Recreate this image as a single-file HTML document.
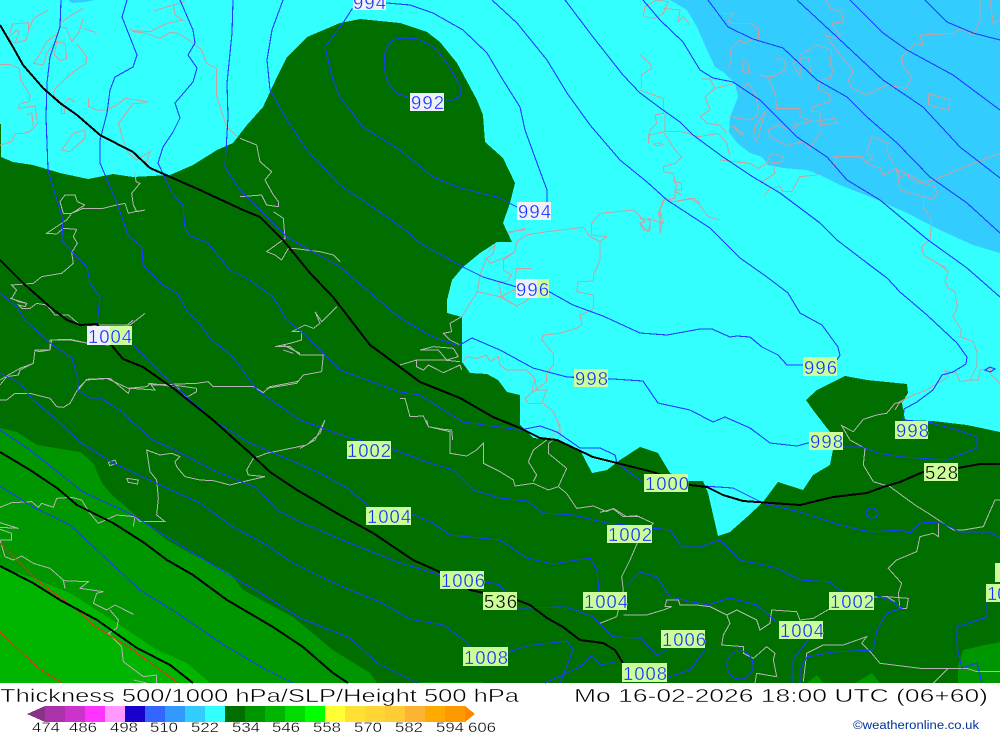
<!DOCTYPE html>
<html><head><meta charset="utf-8"><title>Thickness 500/1000 hPa/SLP/Height 500 hPa</title>
<style>
html,body{margin:0;padding:0;background:#fff;width:1000px;height:733px;overflow:hidden}
svg{display:block}
.n *{vector-effect:non-scaling-stroke}
text{font-family:"Liberation Sans",sans-serif}
.l{font-size:18.5px;fill:#1030ff;stroke:#ccff99;stroke-width:.35px}
.w{stroke:#f0f0f8}
.k{font-size:18.5px;fill:#000;stroke:#ccff99;stroke-width:.35px}
.t{font-size:18.5px;fill:#000;stroke:#fff;stroke-width:.45px}
.s{font-size:14px;fill:#000;stroke:#fff;stroke-width:.3px}
</style></head><body>
<svg width="1000" height="733" viewBox="0 0 1000 733" xmlns="http://www.w3.org/2000/svg">
<rect width="1000" height="733" fill="#fff"/>
<g shape-rendering="crispEdges">
<rect width="1000" height="683" fill="#33ffff"/>
<polygon fill="#33ccff" points="670,0 687,10 697,27 707,50 715,67 723,72 735,83 738,97 730,117 729,132 737,143 750,153 762,157 768,165 783,168 807,170 820,175 840,185 873,198 907,213 940,230 973,245 1000,253 1000,0"/>
<polygon fill="#33ccff" points="68,0 72,3 85,2 95,0"/>
<polygon fill="#006f00" points="0,124 1,124 1,157 13,162 33,165 60,173 88,179 113,174 133,177 170,175 193,165 217,150 233,143 247,125 263,107 277,77 287,57 307,37 340,23 360,19 400,23 427,32 440,42 457,63 477,100 483,115 485,142 503,158 515,183 510,203 503,223 512,242 497,242 480,253 463,267 452,280 447,300 447,313 462,317 462,362 470,373 487,374 498,380 507,392 520,395 520,425 533,438 557,440 580,450 592,473 607,470 620,460 640,447 658,453 670,473 688,481 703,481 708,493 718,536 730,532 747,517 763,502 778,482 803,490 813,475 830,465 833,450 830,432 813,410 806,400 817,390 845,376 867,380 907,384 908,393 902,403 905,420 933,421 967,425 1000,432 1000,683 0,683"/>
<polygon fill="#009600" points="0,428 17,432 37,445 80,452 93,463 102,483 112,495 133,513 167,540 190,553 230,573 243,590 293,617 333,650 370,673 377,683 0,683"/>
<polygon fill="#00b400" points="0,567 33,578 70,593 117,623 157,650 187,663 210,683 0,683"/>
<polygon fill="#009600" points="958,683 958,667 963,650 985,645 1000,642 1000,683"/>
<polygon fill="#009600" points="807,683 817,675 823,683"/>
<polygon fill="#009600" points="855,683 872,673 880,683"/>
<polygon fill="#009600" points="420,683 422,682 482,682 484,683"/>

<!-- coastlines on water -->
<g class="n" fill="none" stroke="#c4a2a2" stroke-width="1">
<g transform="scale(.33333)">
<path d="M0 193H30L58 205 62 240 90 285 88 305 60 310 55 325 105 318 113 370 90 395 70 400 45 400 35 425 0 435"/>
<path d="M80 345L95 338 100 380"/>
<path d="M145 30L100 55 85 95 78 120 45 130 22 115 50 90 58 95 45 130M30 100L37 72 85 68 85 95"/>
<path d="M250 25L215 45 180 70 175 100 140 125 115 170 100 190 130 195 140 160 170 120"/>
<path d="M250 55L235 100 215 125 200 85 180 80M250 85L290 98"/>
<path d="M170 125L195 130 200 175 180 182 163 165Z"/>
<path d="M230 130L260 170 258 190 220 215 165 265 160 285 185 310 185 340 195 340 190 315 205 295 225 305"/>
<path d="M265 295L265 320 290 330 320 330 350 315 375 295 445 305 420 310 400 310 355 370 370 420 385 460 410 480 450 455 435 495"/>
<path d="M390 85L400 95 440 100 480 115 510 97 535 100 580 130 605 150 620 190 650 205 650 290 680 380 715 412"/>
<path d="M460 33L520 15 555 5M520 15L525 45 550 60 500 70 450 95 400 92"/>
<path d="M255 390L220 400 185 450 210 455 255 415Z"/>
</g>
<g transform="translate(400 180) scale(.33333)">
<path d="M322 160L375 145 375 150 325 155"/>
<path d="M265 215L285 195 280 220 260 235 270 250 310 235 345 215 350 185 380 165 440 155 550 142 570 170 600 185 600 240 580 285 580 303 535 305 530 335 580 345 580 385 565 395 540 405 545 435 530 445 480 460 430 465 425 480 460 520 460 555 440 580 440 605 405 630 375 655 385 670 425 670 440 630 410 630 405 600"/>
<path d="M600 185L620 170 575 165 575 130 600 100 700 90 720 110 735 125 720 130 745 155 750 130 745 115 775 125 790 130 780 90 795 55 820 65 885 55 900 70"/>
<path d="M780 90V160M820 0L830 15 825 35 845 45"/>
<path d="M260 235L240 285 232 335 185 410"/>
<path d="M232 335L300 350 350 378 375 365 415 330 415 310 385 300M350 378L305 350 340 330 395 340"/>
<path d="M345 215L310 240 310 270 335 285 320 305 295 305 305 350M345 300L350 265 395 265"/>
<path d="M190 545L200 530 230 535 260 525 270 545 295 530 300 555 320 570 380 570 405 595 395 635M430 670L460 695 480 740 480 775"/>
</g>
<g transform="translate(640 0) scale(.33333)">
<path d="M10 50L15 20 50 0 85 5 70 40 45 55 10 50M70 25L120 30 115 65 130 50 150 75"/>
<path d="M215 40H280L265 65 275 70 330 70 355 85 355 115 335 120 310 130 300 120 270 150 275 180 265 205"/>
<path d="M310 175L308 215 325 220 327 200Z"/>
<path d="M405 175L435 180 435 210 400 230 360 225 385 235 405 280 410 325 480 325 480 350 520 365 585 355 590 370 535 375"/>
<path d="M465 175L460 195 480 230 480 175 505 172 515 225"/>
<path d="M560 0L570 25 605 35 610 65 575 70 600 105 585 115 555 105 640 215 625 240 635 265 680 285 740 255 800 265 815 230 790 200 785 170 825 130 850 135 840 105 940 100 960 88 1000 105 1020 60 1020 0"/>
<path d="M1050 0L1060 70 1080 60"/>
<path d="M480 165L530 135 575 150 570 190 580 210 570 235 540 240 535 265 570 285 570 305 520 320 515 335 540 335 540 380"/>
<path d="M300 270L325 250 345 280 355 320 350 350 325 360 270 350"/>
<path d="M375 335L345 380 340 410 350 425Z"/>
<path d="M275 375L310 400 305 405Z"/>
<path d="M385 390L415 375 460 395 465 375 510 365M385 390L390 410 440 437 490 425 510 445 545 390"/>
<path d="M580 470H665L680 490 720 505 730 525 770 505 780 530 800 525 830 550 880 540 1000 490 1080 460"/>
<path d="M680 490L700 470 680 460 695 410 710 415 745 430 740 455 760 490"/>
<path d="M580 505L590 470M535 525L480 530 455 575 430 575 420 560 390 565 375 585M360 550L405 520 400 490 390 490 430 485 430 470 395 460 380 490 355 505 330 490 240 480"/>
<path d="M780 570L770 510 800 520 850 550 885 560 890 580 880 598 850 590 780 570M850 590L850 620 875 660 870 720 845 740 850 765 920 805"/>
<path d="M865 280L930 300 925 330 865 315Z"/>
<path d="M185 237H210L225 265 195 290 210 330 180 350 200 370 240 375 260 400M225 265L285 250"/>
<path d="M0 270L70 295 70 340 45 345 50 370 30 390 25 430 25 405 75 395 125 395 175 410 235 400 260 430 270 470M75 340V395"/>
<path d="M40 433Q55 425 68 433 55 440 40 433"/>
<path d="M70 395L105 450 125 470 105 490 70 500 70 515 100 520 105 545 125 550 125 570 105 570 105 595 70 600 55 640 65 680 60 700M100 605L150 595 175 610 205 650 240 660M0 655L30 660 30 690 10 690 0 670"/>
<path d="M0 165L30 190 35 205 5 225 5 265"/>
</g>
<g transform="translate(700 240) scale(.33333)">
<path d="M690 0L665 20 670 45 720 75 745 95 735 125 745 145 765 155 772 205 758 230 785 270 780 290 820 305 832 340 830 380 810 420 780 425 770 400 735 392 745 410 680 450 640 465 600 485 585 510"/>
<path d="M810 420L835 420 840 390 870 385 875 405 900 430"/>
</g>
</g>

<!-- coastlines on land -->
<g class="n" fill="none" stroke="#b4b4b4" stroke-width="1">
<g transform="translate(0 130) scale(.33333)">
<path d="M720 25L770 45 780 95 815 125"/>
<path d="M815 125L795 150 820 195 835 215 835 230 800 225 785 195 720 200"/>
<path d="M405 130L408 155 420 160 395 190 400 225 410 245 435 240 405 245 385 250 375 220 350 225 310 235 250 235 215 250"/>
<path d="M255 225L215 250 190 250 180 215 195 195 225 195 232 215 255 225"/>
<path d="M215 250L200 270 170 290 140 310 170 312 190 295 230 298 220 320 232 340 215 368 220 400 185 430 125 440 100 460 35 465 50 480 35 505 55 515 80 520"/>
<path d="M30 505L80 520 75 530 55 525 65 535 90 535 110 520 140 525 165 555 205 555 240 585 390 585 435 550"/>
<path d="M150 630L210 628 265 640 325 645 340 620 400 570"/>
<path d="M150 630L150 660 115 665 105 660 100 700 60 715 25 735 0 750"/>
<path d="M235 780L260 748 320 745 385 775 440 770 450 760 520 770"/>
<path d="M820 245L850 265 855 325 800 365 825 375 845 390 865 355 880 355 960 365 1000 375 1020 395"/>
<path d="M945 545L965 575 1010 530M945 545L960 580 940 595 915 585 875 605 905 605 905 630 870 640 825 650 870 650 900 675 970 675 965 725 910 735 890 760 800 775"/>
<path d="M850 645L900 670M850 660L880 670"/>
</g>
<g transform="translate(400 180) scale(.33333)">
<path d="M185 410L150 430 155 455 130 460 150 480 180 495"/>
<path d="M60 510L100 500 160 505 175 530 140 540 115 510Z"/>
<path d="M0 555L50 540 130 540 180 545M50 540L50 560 70 570 85 555 130 578 180 555 185 570"/>
<path d="M0 655H15L30 710 70 708 85 740 130 748 155 750 158 780"/>
</g>
<g transform="translate(0 320) scale(.33333)">
<path d="M445 190L460 195 590 190 625 185 640 200 740 200M450 190L465 210 390 205 385 220 330 175 260 180 235 205 210 250 190 262 170 260 150 235 90 220 45 220 20 240 0 240"/>
<path d="M520 195L590 205 590 215 560 232 530 200"/>
<path d="M740 200H760L790 218 810 200 890 185 900 180"/>
<path d="M0 195L20 170 55 165 60 150 100 130 105 90 150 90 155 60 210 60 265 70"/>
</g>
<g transform="translate(0 420) scale(.33333)">
<path d="M975 0L960 40 920 75 800 100 760 115 740 150 745 165 795 170 730 185 690 195 640 182 600 180 555 170 530 140 525 125 540 110 515 100 480 105 440 90 450 155 470 180 475 235 470 285 495 305 420 305 405 290 350 285 295 310 270 280 245 240 215 232 170 235 160 262 125 250 115 262 95 245 35 248 0 262"/>
<path d="M405 290L400 320"/>
<path d="M325 128L345 120 350 130 330 137Z"/>
<path d="M380 175L415 180 412 192 385 187Z"/>
<path d="M0 308L55 325 0 322M0 328L35 340 35 360 0 360"/>
<path d="M0 360L15 410 40 420 65 408 100 430 150 445 190 480 195 505 190 482 265 485 240 505 310 515 290 520 280 550 320 570 345 555 400 583"/>
<path d="M330 570L355 600 350 625 325 640 365 680 370 725 430 770 470 765 470 789M400 780L440 789"/>
</g>
<g transform="translate(600 360) scale(.33333)">
<path d="M910 125L885 130 860 160 830 165 790 178 760 215 725 197 750 240 795 265 790 315 820 365 870 380 945 435 985 460 1060 510 1090 510 1150 500 1165 465 1185 420 1200 420"/>
<path d="M0 457L40 447 70 470 110 467 160 490 120 530 90 600 65 650 70 690 50 770 0 790"/>
<path d="M70 765L140 765 190 750 215 740 195 740 200 720 235 720 240 735 290 735 330 740 380 765 390 790 370 825 365 855 430 860 430 880 460 895 500 860 525 880 520 900 530 950 470 940 465 969"/>
<path d="M380 765L410 750 470 780 480 810 510 790 515 750 590 755 600 780 640 775 700 740 790 712 860 710 885 725"/>
<path d="M860 710L925 715 920 745 900 745 895 700 905 670 865 625 890 600 950 575 960 530 1000 520 1015 530 1015 490"/>
<path d="M610 965L620 880 670 855 730 855 800 830 785 850 815 880 840 910 960 925 1100 925 1130 935 1200 935M1045 925L1000 969"/>
</g>
<g transform="translate(300 420) scale(.33333)">
<path d="M0 85L45 60 75 0"/>
<path d="M380 0L385 20 450 35 450 100 500 108 530 90 550 70 550 130 600 155 640 180 645 198 700 190 745 210 775 200 800 220 830 265 880 258 920 275 940 265 980 290 1020 290"/>
<path d="M770 0L780 30 700 90 685 125 710 165 700 185M745 70L745 100 800 145 775 200M760 60L745 70"/>
</g>
</g>

<!-- red -->
<g fill="none" stroke="#ff2020" stroke-width="1">
<polyline points="0,543 37,580 77,610 93,625 133,650 178,683"/>
<polyline points="0,632 37,667 62,683"/>
</g>

<!-- isobars -->
<g fill="none" stroke="#1c3cff" stroke-width="1.1">
<polyline points="61,0 60,27 50,57 47,83 46,117 48,170 63,220 62,240 73,253 87,267 90,283 100,297 97,323"/>
<polyline points="127,0 122,17 137,55 133,67 115,77 110,90 107,113 100,140 100,163 117,203 128,235 142,247 143,265 163,285 177,293 188,313 197,320 210,338 233,357 257,390 300,420 350,438 392,449 427,462 453,470 473,490 500,498 527,501 543,513 573,515 607,523 652,528 670,530 682,547 700,547 720,540 740,560 777,568 800,580 830,582 842,592 873,595 890,600 902,608 887,613 877,630 873,650 833,652 807,657 800,670 800,683"/>
<polyline points="180,0 193,30 195,43 188,55 197,68 193,82 175,103 180,118 173,132 163,147 158,163 172,193 183,205 185,228 190,236 207,242 230,270 250,280 273,297 287,320 307,337 340,370 400,392 420,395 463,422 520,430 540,426 557,432 580,448 600,448 615,455 617,463 643,482 688,485 733,488 763,503 800,512 840,525 870,532 900,530 910,533 920,523 940,522 960,532 990,532 1000,538"/>
<polyline points="283,0 272,30 267,60 270,90 287,120 307,150 340,185 377,210 403,228 420,243 463,267 483,277 517,287 548,291 573,305 603,316 640,333 667,335 700,329 712,329 730,337 737,336 750,337 762,347 778,355 787,365 803,365"/>
<polyline points="233,0 232,33 227,83 228,117 225,167 240,190 260,210 287,237 340,267 400,318 433,337 458,346 472,338 500,350 533,368 567,377 613,379 643,381 658,403 690,410 713,422 725,417 750,428 770,443 797,446 808,443 843,447 863,447 877,453 903,457 947,460 977,448 977,437 957,430 928,422 903,420 904,409 917,402 933,390 942,375 953,372 966,364 967,357 957,343 927,315 900,292 887,278 867,263 837,240 820,223 780,193 753,177 723,157 693,135 680,122 663,110 640,93 623,75 593,37 565,0"/>
<polyline points="343,23 352,9 387,3 410,5 433,13 463,30 487,53 503,80 520,107 525,130 537,163 547,190 547,202"/>
<polyline points="343,23 325,47 333,80 340,97 363,127 400,150 433,177 460,188 497,197 517,207"/>
<polyline points="408,97 398,94 390,87 386,77 384,65 385,53 389,44 395,39 405,38 418,39 428,44 437,50 446,62 453,73 458,82 461,88 461,94 458,98 452,100 445,100"/>
<polyline points="492,0 517,23 547,60 567,93 590,125 620,160 647,182 667,200 710,228 722,240 740,258 767,277 788,293 800,313 822,325 838,347 840,355 837,360"/>
<polyline points="643,0 660,20 683,42 700,70 713,78 733,82 760,100 797,137 827,157 847,180 880,200 928,240 967,268 1000,297"/>
<polyline points="708,0 728,27 753,39 783,48 817,80 847,97 867,117 897,143 930,177 967,203 1000,233"/>
<polyline points="797,0 837,37 883,80 923,107 960,147 1000,178"/>
<polyline points="850,0 883,33 907,50 953,75 1000,110"/>
<polyline points="925,0 947,22 973,33 1000,40"/>
<polyline points="0,293 17,307 25,320 50,343 72,358 78,380 78,390 90,398 100,398 123,412 130,420 153,440 173,449 213,470 257,488 277,510 300,522 347,542 400,563 440,575 483,581 500,585 517,608 567,607 593,617 613,637 640,638 657,655 667,650"/>
<polyline points="705,650 690,670 668,677"/>
<polyline points="0,373 20,383 33,400 57,420 80,442 113,463 160,485 200,503 233,527 267,545 293,563 317,575 350,590 380,602 410,619 443,625 467,642 470,648"/>
<polyline points="508,652 527,646 567,641 573,650 560,683"/>
<polyline points="133,345 177,388 213,420 250,443 283,457 320,473 347,488 370,507"/>
<polyline points="412,514 433,523 450,535 500,540 527,558 553,564 590,558 597,570 599,592"/>
<polyline points="625,587 640,572 657,577 670,597 707,605 730,598 757,605 778,623"/>
<polyline points="808,640 793,660 793,683"/>
<polyline points="0,430 30,450 83,492 133,515 167,537 193,553 233,577 267,597 300,618 350,638 377,663 417,683"/>
<polyline points="0,486 33,507 70,525 100,553 140,590 177,613 227,647 263,668 293,683"/>
<polyline points="987,602 987,617 957,627 957,647 962,668 977,663 982,683"/>
<polyline points="545,683 580,667 592,655 600,665 615,662"/>
<ellipse cx="740" cy="665" rx="13" ry="14"/>
<ellipse cx="872" cy="513" rx="6" ry="5"/>
<polygon points="985,370 990,367 995,369 990,372"/>
</g>

<!-- thickness lines -->
<g fill="none" stroke="#000" stroke-width="2">
<polyline points="0,25 13,47 23,65 43,88 60,103 77,115 100,135 133,152 150,168 200,190 243,210 260,217 283,240 310,273 333,297 370,345 400,367 420,382 460,398 493,417 520,428 540,438 557,440 593,457 617,463 653,472 690,485 707,487 723,495 743,501 800,505 833,497 867,493 883,487 900,482 923,472 958,468 980,464 1000,464"/>
<polyline points="0,260 23,283 50,307 67,320 80,325 97,324 113,347 123,359 143,367 173,388 213,420 233,438 250,453 270,472 297,490 340,515 373,533 413,560 440,572 470,590 517,600 530,605 547,618 563,627 580,640 603,643 615,650 623,663"/>
<polyline points="0,452 30,470 57,488 77,505 113,523 143,542 167,560 193,575 227,600 273,627 303,647 333,673 348,683"/>
<polyline points="0,566 33,583 60,600 97,620 137,648 170,665 193,683"/>
</g>

<!-- label boxes -->
<g fill="#ccff99">
<rect x="574" y="369" width="34" height="18"/>
<rect x="347" y="441" width="44" height="18"/>
<rect x="366" y="507" width="45" height="18"/>
<rect x="440" y="571" width="44" height="18"/>
<rect x="483" y="592" width="34" height="18"/>
<rect x="463" y="647" width="45" height="19"/>
<rect x="607" y="525" width="45" height="18"/>
<rect x="644" y="474" width="44" height="18"/>
<rect x="809" y="432" width="34" height="18"/>
<rect x="895" y="421" width="33" height="18"/>
<rect x="803" y="357" width="34" height="19"/>
<rect x="924" y="463" width="34" height="18"/>
<rect x="779" y="621" width="44" height="18"/>
<rect x="829" y="592" width="45" height="18"/>
<rect x="661" y="630" width="44" height="18"/>
<rect x="622" y="663" width="45" height="19"/>
<rect x="583" y="592" width="44" height="18"/>
<rect x="986" y="584" width="14" height="18"/>
<rect x="995" y="563" width="5" height="19"/>
<rect x="516" y="279" width="33" height="19"/>
<rect x="87" y="326" width="45" height="19"/>
</g>
<g fill="#f0f0f8">
<rect x="353" y="0" width="33" height="10"/>
<rect x="410" y="93" width="34" height="18"/>
<rect x="517" y="202" width="34" height="18"/>
<rect x="516" y="279" width="21" height="19"/>
<rect x="87" y="326" width="23" height="19"/>
</g>
</g>

<!-- label text -->
<text class="l w" x="353" y="9" textLength="33" lengthAdjust="spacing">994</text>
<text class="l w" x="411" y="109" textLength="33" lengthAdjust="spacing">992</text>
<text class="l w" x="518" y="218" textLength="33" lengthAdjust="spacing">994</text>
<text class="l w" x="516" y="296" textLength="33" lengthAdjust="spacing">996</text>
<text class="l" x="575" y="385" textLength="33" lengthAdjust="spacing">998</text>
<text class="l" x="804" y="374" textLength="33" lengthAdjust="spacing">996</text>
<text class="l" x="810" y="448" textLength="33" lengthAdjust="spacing">998</text>
<text class="l" x="896" y="437" textLength="33" lengthAdjust="spacing">998</text>
<text class="k" x="925" y="479" textLength="33" lengthAdjust="spacing">528</text>
<text class="k" x="484" y="608" textLength="33" lengthAdjust="spacing">536</text>
<text class="l w" x="88" y="343" textLength="44" lengthAdjust="spacing">1004</text>
<text class="l" x="347" y="457" textLength="44" lengthAdjust="spacing">1002</text>
<text class="l" x="367" y="523" textLength="44" lengthAdjust="spacing">1004</text>
<text class="l" x="441" y="587" textLength="44" lengthAdjust="spacing">1006</text>
<text class="l" x="464" y="664" textLength="44" lengthAdjust="spacing">1008</text>
<text class="l" x="608" y="541" textLength="44" lengthAdjust="spacing">1002</text>
<text class="l" x="645" y="490" textLength="44" lengthAdjust="spacing">1000</text>
<text class="l" x="780" y="637" textLength="44" lengthAdjust="spacing">1004</text>
<text class="l" x="830" y="608" textLength="44" lengthAdjust="spacing">1002</text>
<text class="l" x="662" y="646" textLength="44" lengthAdjust="spacing">1006</text>
<text class="l" x="623" y="680" textLength="44" lengthAdjust="spacing">1008</text>
<text class="l" x="584" y="608" textLength="44" lengthAdjust="spacing">1004</text>
<text class="l" x="987" y="600">10</text>

<!-- title -->
<text class="t" x="0" y="702" textLength="519" lengthAdjust="spacingAndGlyphs">Thickness 500/1000 hPa/SLP/Height 500 hPa</text>
<text class="t" x="574" y="702" textLength="414" lengthAdjust="spacingAndGlyphs">Mo 16-02-2026 18:00 UTC (06+60)</text>

<!-- legend -->
<g shape-rendering="crispEdges">
<polygon points="27,714 45,706 45,722" fill="#883388"/>
<rect x="45" y="706" width="20" height="16" fill="#aa33aa"/>
<rect x="65" y="706" width="20" height="16" fill="#cc33cc"/>
<rect x="85" y="706" width="20" height="16" fill="#ff33ff"/>
<rect x="105" y="706" width="20" height="16" fill="#ff99ff"/>
<rect x="125" y="706" width="20" height="16" fill="#1a00cc"/>
<rect x="145" y="706" width="20" height="16" fill="#3366ff"/>
<rect x="165" y="706" width="20" height="16" fill="#3399ff"/>
<rect x="185" y="706" width="20" height="16" fill="#33ccff"/>
<rect x="205" y="706" width="20" height="16" fill="#33ffff"/>
<rect x="225" y="706" width="20" height="16" fill="#006f00"/>
<rect x="245" y="706" width="20" height="16" fill="#009600"/>
<rect x="265" y="706" width="20" height="16" fill="#00b400"/>
<rect x="285" y="706" width="20" height="16" fill="#00dc00"/>
<rect x="305" y="706" width="20" height="16" fill="#00ff00"/>
<rect x="325" y="706" width="20" height="16" fill="#ffff33"/>
<rect x="345" y="706" width="20" height="16" fill="#ffe033"/>
<rect x="365" y="706" width="20" height="16" fill="#ffd633"/>
<rect x="385" y="706" width="20" height="16" fill="#ffcc33"/>
<rect x="405" y="706" width="20" height="16" fill="#ffb333"/>
<rect x="425" y="706" width="20" height="16" fill="#ffaa00"/>
<rect x="445" y="706" width="20" height="16" fill="#ff9900"/>
<polygon points="465,706 475,714 465,722" fill="#ff8800"/>
</g>
<text class="s" x="32" y="732" textLength="28" lengthAdjust="spacingAndGlyphs">474</text>
<text class="s" x="69" y="732" textLength="28" lengthAdjust="spacingAndGlyphs">486</text>
<text class="s" x="110" y="732" textLength="28" lengthAdjust="spacingAndGlyphs">498</text>
<text class="s" x="150" y="732" textLength="28" lengthAdjust="spacingAndGlyphs">510</text>
<text class="s" x="191" y="732" textLength="28" lengthAdjust="spacingAndGlyphs">522</text>
<text class="s" x="232" y="732" textLength="28" lengthAdjust="spacingAndGlyphs">534</text>
<text class="s" x="272" y="732" textLength="28" lengthAdjust="spacingAndGlyphs">546</text>
<text class="s" x="313" y="732" textLength="28" lengthAdjust="spacingAndGlyphs">558</text>
<text class="s" x="354" y="732" textLength="28" lengthAdjust="spacingAndGlyphs">570</text>
<text class="s" x="395" y="732" textLength="28" lengthAdjust="spacingAndGlyphs">582</text>
<text class="s" x="436" y="732" textLength="28" lengthAdjust="spacingAndGlyphs">594</text>
<text class="s" x="468" y="732" textLength="28" lengthAdjust="spacingAndGlyphs">606</text>
<text x="853" y="729" font-size="11.5" fill="#003399" textLength="126" lengthAdjust="spacingAndGlyphs">©weatheronline.co.uk</text>
</svg>
</body></html>
